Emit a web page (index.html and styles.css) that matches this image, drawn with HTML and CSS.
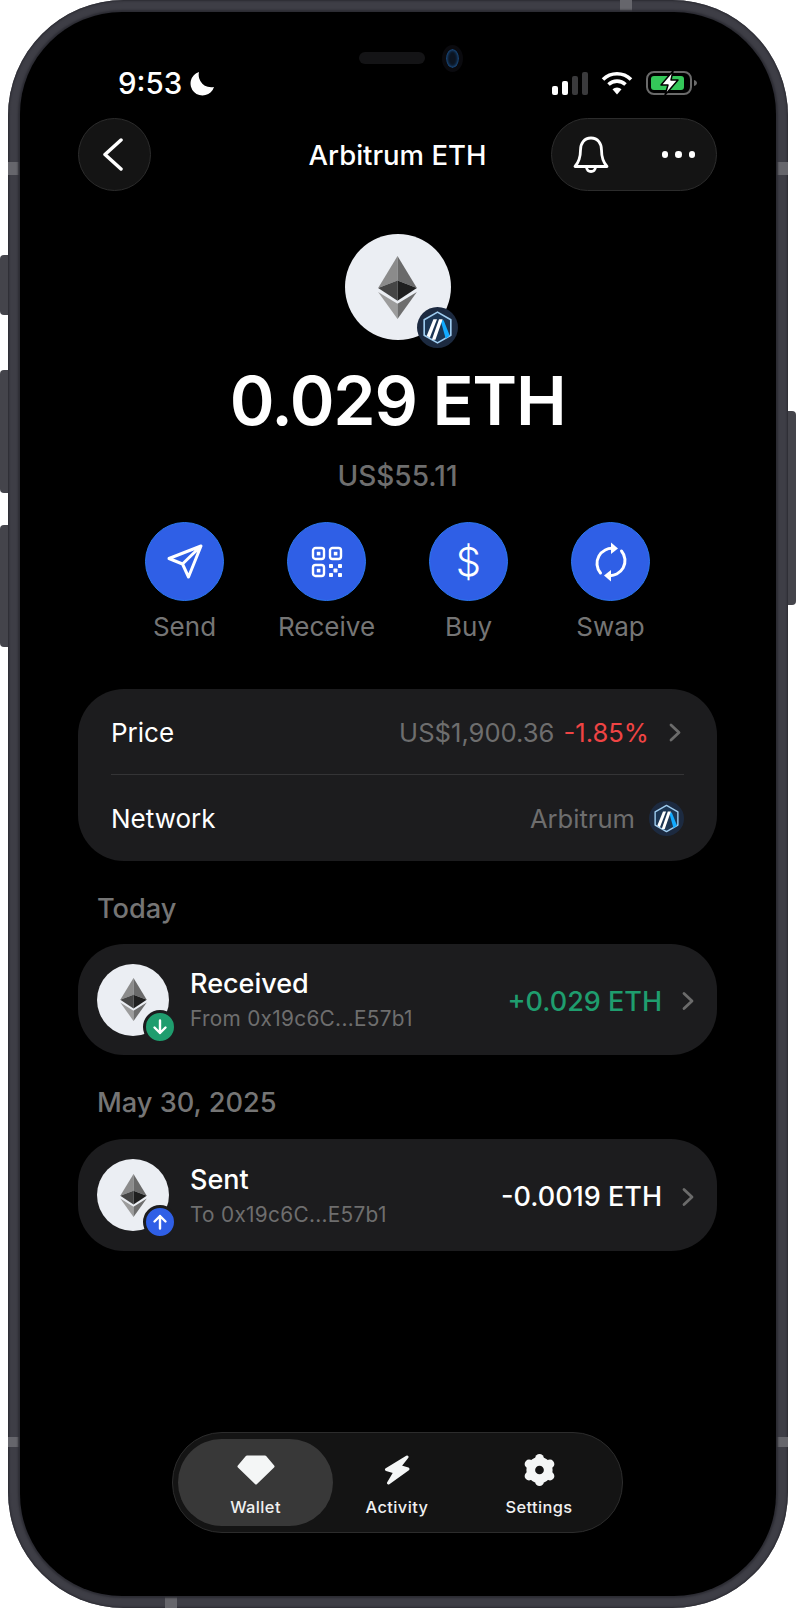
FILE: index.html
```html
<!DOCTYPE html>
<html lang="en">
<head>
<meta charset="UTF-8" />
<meta name="viewport" content="width=device-width, initial-scale=1" />
<title>Arbitrum ETH</title>
<link rel="stylesheet" href="styles.css">
</head>
<body>
  <svg class="defs" width="0" height="0">
    <symbol id="eth" viewBox="0 0 115 187">
      <polygon points="57.5,0 0,95 57.5,73" fill="#8b8b8b"/>
      <polygon points="57.5,0 115,95 57.5,73" fill="#6a6a6a"/>
      <polygon points="0,95 57.5,73 57.5,133" fill="#454545"/>
      <polygon points="115,95 57.5,73 57.5,133" fill="#1f1f1f"/>
      <polygon points="0,107 57.5,142 57.5,187" fill="#9c9c9c"/>
      <polygon points="115,107 57.5,142 57.5,187" fill="#6e6e6e"/>
    </symbol>
    <symbol id="arb" viewBox="0 0 40 40">
      <circle cx="20" cy="20" r="20" fill="#1c2a40"/>
      <polygon points="20,5 33,12.500 33,27.500 20,35 7,27.500 7,12.500" fill="#1c3654" stroke="#9fcdf0" stroke-width="1.600" stroke-linejoin="round"/>
      <polygon points="23,13 26,13 32,28 28,31" fill="#12aaff"/>
      <polygon points="16,12 19.500,12 12.500,30 9.500,28" fill="#fff"/>
      <polygon points="21.500,12 25,12 18,32 14.500,32" fill="#fff"/>
    </symbol>
  </svg>

  <div class="page">
    <div class="side-btn side-mute"></div>
    <div class="side-btn side-up"></div>
    <div class="side-btn side-down"></div>
    <div class="side-btn side-power"></div>

    <div class="phone">
      <div class="band band-left-top"></div>
      <div class="band band-right-top"></div>
      <div class="band band-left-bottom"></div>
      <div class="band band-right-bottom"></div>
      <div class="band-v band-top"></div>
      <div class="band-v band-bottom"></div>

      <div class="screen">
        <div class="speaker"></div>
        <div class="camera"></div>

        <div class="status-bar">
          <div class="status-left">
            <span class="time">9:53</span>
            <svg width="25" height="25" viewBox="0 0 25 25"><path d="M9 1 A12 12 0 1 0 24 16 A12.500 12.500 0 0 1 9 1 Z" fill="#fff"/></svg>
          </div>
          <div class="status-right">
            <div class="signal">
              <span class="bar bar-1"></span>
              <span class="bar bar-2"></span>
              <span class="bar bar-3"></span>
              <span class="bar bar-4"></span>
            </div>
            <svg width="32" height="24" viewBox="0 0 32 24" fill="none" stroke="#fff" stroke-width="3.600">
              <path d="M2 8.500 A20 20 0 0 1 30 8.500"/>
              <path d="M7.500 13.500 A12.500 12.500 0 0 1 24.500 13.500"/>
              <path d="M16 23.500 L11.500 18.300 A6.500 6.500 0 0 1 20.500 18.300 Z" fill="#fff" stroke="none"/>
            </svg>
            <svg width="52" height="26" viewBox="0 0 52 26">
              <rect x="1" y="2" width="44" height="22" rx="7" fill="none" stroke="#6a6a6a" stroke-width="2"/>
              <rect x="5" y="6" width="33" height="14" rx="3" fill="#34c759"/>
              <path d="M48 10 C50 10.500 51 12 51 13 C51 14 50 15.500 48 16 Z" fill="#6a6a6a"/>
              <path d="M27 1 L15 15 H22 L19 25 L32 10 H25 Z" fill="#fff" stroke="#000" stroke-width="1.500" stroke-linejoin="round"/>
            </svg>
          </div>
        </div>

        <div class="header">
          <button class="back-btn">
            <svg width="20" height="33" viewBox="0 0 20 33" fill="none" stroke="#fff" stroke-width="3.500" stroke-linecap="round" stroke-linejoin="round"><path d="M18 2 L2 16.500 L18 31"/></svg>
          </button>
          <div class="title">Arbitrum ETH</div>
          <div class="header-pill">
            <svg width="36" height="38" viewBox="0 0 36 38" fill="none" stroke="#fff" stroke-width="2.800" stroke-linejoin="round" stroke-linecap="round">
              <path d="M18 2 C11 2 7.500 7.500 7.500 14 C7.500 21 6 26 2 30.500 H34 C30 26 28.500 21 28.500 14 C28.500 7.500 25 2 18 2 Z"/>
              <path d="M13.500 31 C13.500 37 22.500 37 22.500 31"/>
            </svg>
            <div class="dots"><span></span><span></span><span></span></div>
          </div>
        </div>

        <div class="coin">
          <div class="coin-circle">
            <svg class="eth-big"><use href="#eth"/></svg>
          </div>
          <svg class="coin-badge"><use href="#arb"/></svg>
        </div>
        <div class="amount">0.029 ETH</div>
        <div class="amount-usd">US$55.11</div>

        <div class="actions">
          <div class="action">
            <div class="action-circle">
              <svg width="38" height="37" viewBox="-2 -2 38 37" fill="none" stroke="#fff" stroke-width="3" stroke-linejoin="round" stroke-linecap="round">
                <path d="M1 13.500 L33 1 L20.500 32 L14.500 19 Z M14.500 19 L33 1"/>
              </svg>
            </div>
            <span class="action-label">Send</span>
          </div>
          <div class="action">
            <div class="action-circle">
              <svg width="32" height="32" viewBox="0 0 32 32" fill="#fff">
                <g fill="none" stroke="#fff" stroke-width="2.400">
                  <rect x="2" y="2" width="11" height="11" rx="2.500"/>
                  <rect x="19" y="2" width="11" height="11" rx="2.500"/>
                  <rect x="2" y="19" width="11" height="11" rx="2.500"/>
                </g>
                <rect x="5.800" y="5.800" width="3.600" height="3.600"/>
                <rect x="22.800" y="5.800" width="3.600" height="3.600"/>
                <rect x="5.800" y="22.800" width="3.600" height="3.600"/>
                <rect x="18" y="18" width="4" height="4" rx="0.800"/>
                <rect x="27" y="18" width="4" height="4" rx="0.800"/>
                <rect x="22.500" y="22.500" width="4" height="4" rx="0.800"/>
                <rect x="18" y="27" width="4" height="4" rx="0.800"/>
                <rect x="27" y="27" width="4" height="4" rx="0.800"/>
              </svg>
            </div>
            <span class="action-label">Receive</span>
          </div>
          <div class="action">
            <div class="action-circle dollar">$</div>
            <span class="action-label">Buy</span>
          </div>
          <div class="action">
            <div class="action-circle">
              <svg width="36" height="40" viewBox="0 0 36 40" fill="none" stroke="#fff" stroke-width="3" stroke-linecap="round">
                <path d="M21 6.500 A15 15 0 0 0 7.500 31"/>
                <path d="M15 33.500 A15 15 0 0 0 28.500 9"/>
                <polygon points="18,0.500 25,6.500 18,12" fill="#fff" stroke="none"/>
                <polygon points="18,28 11,33.500 18,39.500" fill="#fff" stroke="none"/>
              </svg>
            </div>
            <span class="action-label">Swap</span>
          </div>
        </div>

        <div class="info-card">
          <div class="info-row info-row-price">
            <span>Price</span>
            <div class="info-value">
              <span class="muted">US$1,900.36</span>
              <span class="red">-1.85%</span>
              <svg class="chev-price" width="12" height="19" viewBox="0 0 12 19" fill="none" stroke="#6b6b6b" stroke-width="2.800" stroke-linecap="round" stroke-linejoin="round"><path d="M2 2 L10 9.500 L2 17"/></svg>
            </div>
          </div>
          <div class="info-row">
            <span>Network</span>
            <div class="info-value">
              <span class="muted">Arbitrum</span>
              <svg class="net-icon"><use href="#arb"/></svg>
            </div>
          </div>
        </div>

        <div class="section-label">Today</div>
        <div class="tx-row">
          <div class="tx-icon">
            <svg class="eth-small"><use href="#eth"/></svg>
            <div class="tx-badge tx-badge-in">
              <svg width="16" height="16" viewBox="0 0 16 16" fill="none" stroke="#fff" stroke-width="2.400" stroke-linecap="round" stroke-linejoin="round"><path d="M8 1.500 V14 M2.500 8.500 L8 14 L13.500 8.500"/></svg>
            </div>
          </div>
          <div class="tx-text">
            <div class="tx-title">Received</div>
            <div class="tx-sub">From 0x19c6C...E57b1</div>
          </div>
          <div class="tx-amount green">+0.029 ETH</div>
          <svg class="tx-chev" width="14" height="20" viewBox="0 0 14 20" fill="none" stroke="#6b6b6b" stroke-width="2.800" stroke-linecap="round" stroke-linejoin="round"><path d="M3 2.500 L11 10 L3 17.500"/></svg>
        </div>

        <div class="section-label">May 30, 2025</div>
        <div class="tx-row tx-row-sent">
          <div class="tx-icon">
            <svg class="eth-small"><use href="#eth"/></svg>
            <div class="tx-badge tx-badge-out">
              <svg width="16" height="16" viewBox="0 0 16 16" fill="none" stroke="#fff" stroke-width="2.400" stroke-linecap="round" stroke-linejoin="round"><path d="M8 14.500 V2 M2.500 7.500 L8 2 L13.500 7.500"/></svg>
            </div>
          </div>
          <div class="tx-text">
            <div class="tx-title">Sent</div>
            <div class="tx-sub">To 0x19c6C...E57b1</div>
          </div>
          <div class="tx-amount">-0.0019 ETH</div>
          <svg class="tx-chev" width="14" height="20" viewBox="0 0 14 20" fill="none" stroke="#6b6b6b" stroke-width="2.800" stroke-linecap="round" stroke-linejoin="round"><path d="M3 2.500 L11 10 L3 17.500"/></svg>
        </div>

        <div class="tab-bar">
          <div class="tab tab-active">
            <div class="tab-icon">
              <svg width="38" height="30" viewBox="0 0 38 30"><polygon points="10,2 28,2 36,11.500 19,28 2,11.500" fill="#f4f6f6" stroke="#f4f6f6" stroke-width="3" stroke-linejoin="round"/></svg>
            </div>
            <span>Wallet</span>
          </div>
          <div class="tab">
            <div class="tab-icon">
              <svg width="26" height="30" viewBox="0 0 26 30"><polygon points="23,2 2.500,14.500 11,17 4.500,28 24,14 15.500,11.500" fill="#f4f6f6" stroke="#f4f6f6" stroke-width="3" stroke-linejoin="round"/></svg>
            </div>
            <span>Activity</span>
          </div>
          <div class="tab">
            <div class="tab-icon">
              <svg width="33" height="34" viewBox="-17 -17 34 34" fill="#f4f6f6">
                <circle r="9" fill="none" stroke="#f4f6f6" stroke-width="9"/>
                <circle cx="0" cy="-12" r="4.500"/>
                <circle cx="0" cy="12" r="4.500"/>
                <circle cx="10.800" cy="-6.200" r="4.500"/>
                <circle cx="-10.800" cy="-6.200" r="4.500"/>
                <circle cx="10.800" cy="6.200" r="4.500"/>
                <circle cx="-10.800" cy="6.200" r="4.500"/>
              </svg>
            </div>
            <span>Settings</span>
          </div>
        </div>
      </div>
    </div>
  </div>
</body>
</html>
```

FILE: styles.css
```css
html, body {
  margin: 0;
  background: #fff;
}
body {
  font-family: Inter, "Liberation Sans", sans-serif;
  color: #fff;
}
.defs {
  position: absolute;
}
.page {
  position: relative;
  width: 796px;
  height: 1608px;
  padding: 0 8px;
  box-sizing: border-box;
  overflow: hidden;
}

/* phone frame */
.phone {
  position: relative;
  height: 1608px;
  padding: 12px;
  box-sizing: border-box;
  background: #3e3e46;
  border-radius: 116px;
  box-shadow: inset 0 0 2px 1px #2a2a31;
}
.screen {
  position: relative;
  height: 100%;
  padding: 48px 59px 63px 58px;
  box-sizing: border-box;
  display: flex;
  flex-direction: column;
  background: #000;
  border-radius: 102px;
  box-shadow: 0 0 2px 2px #2c2c33;
}
.side-btn {
  position: absolute;
  width: 9px;
  background: #44444b;
  border-radius: 4px 0 0 4px;
  left: 0;
}
.side-mute { top: 255px; height: 60px; }
.side-up { top: 370px; height: 123px; }
.side-down { top: 525px; height: 122px; }
.side-power {
  left: auto;
  right: 0;
  top: 411px;
  height: 194px;
  border-radius: 0 4px 4px 0;
}
.band, .band-v {
  position: absolute;
  background: #66666c;
}
.band { width: 12px; height: 13px; }
.band-v { width: 12px; height: 12px; }
.band-left-top { left: 0; top: 162px; }
.band-right-top { right: 0; top: 162px; }
.band-left-bottom { left: 0; top: 1437px; height: 10px; }
.band-right-bottom { right: 0; top: 1437px; height: 10px; }
.band-top { top: 0; left: 612px; }
.band-bottom { bottom: 0; left: 157px; }

.speaker {
  position: absolute;
  top: 40px;
  left: 339px;
  width: 66px;
  height: 12px;
  background: #141416;
  border-radius: 6px;
}
.camera {
  position: absolute;
  top: 33px;
  left: 422px;
  width: 21px;
  height: 27px;
  background: #0c1420;
  border: 4px solid #0a0a0e;
  box-sizing: border-box;
  border-radius: 50%;
  box-shadow: inset 0 0 3px 1px #1d5a9a;
}

/* status bar */
.status-bar {
  height: 46px;
  flex: none;
  display: flex;
  align-items: center;
  justify-content: space-between;
  margin: 0 19px 0 40px;
}
.status-left {
  display: flex;
  align-items: center;
  gap: 8px;
}
.time {
  font-size: 29.500px;
  font-weight: 500;
}
.status-right {
  display: flex;
  align-items: center;
  gap: 13px;
}
.signal {
  display: flex;
  align-items: flex-end;
  gap: 4px;
  height: 23px;
}
.bar {
  width: 6px;
  border-radius: 2px;
  background: #fff;
}
.bar-1 { height: 9px; }
.bar-2 { height: 14px; }
.bar-3 { height: 19px; background: #3a3a3c; }
.bar-4 { height: 23px; background: #3a3a3c; }

/* header */
.header {
  flex: none;
  height: 73px;
  margin-top: 12px;
  display: grid;
  grid-template-columns: 1fr auto 1fr;
  align-items: center;
}
.back-btn {
  width: 73px;
  height: 73px;
  padding: 0 4px 0 0;
  background: #141414;
  border: 1px solid #2c2c2c;
  border-radius: 50%;
  display: flex;
  align-items: center;
  justify-content: center;
}
.title {
  font-size: 27.500px;
  font-weight: 500;
}
.header-pill {
  justify-self: end;
  width: 166px;
  height: 73px;
  padding: 0 21px 0 21px;
  box-sizing: border-box;
  background: #141414;
  border: 1px solid #2c2c2c;
  border-radius: 37px;
  display: flex;
  align-items: center;
  justify-content: space-between;
}
.dots {
  display: flex;
  gap: 7px;
}
.dots span {
  width: 6.500px;
  height: 6.500px;
  background: #fff;
  border-radius: 50%;
}

/* coin */
.coin {
  position: relative;
  flex: none;
  width: 106px;
  height: 106px;
  margin: 43px auto 0;
}
.coin-circle {
  width: 106px;
  height: 106px;
  background: #ebeef3;
  border-radius: 50%;
  display: flex;
  align-items: center;
  justify-content: center;
}
.eth-big {
  width: 39px;
  height: 63px;
}
.coin-badge {
  position: absolute;
  right: -7px;
  bottom: -8px;
  width: 41px;
  height: 41px;
}
.amount {
  margin-top: 16px;
  font-size: 68px;
  letter-spacing: -1.300px;
  line-height: 88px;
  font-weight: 600;
  text-align: center;
}
.amount-usd {
  margin-top: 14px;
  font-size: 28px;
  line-height: 36px;
  color: #6e6e6e;
  font-weight: 500;
  text-align: center;
}

/* actions */
.actions {
  flex: none;
  margin: 28px auto 0;
  display: grid;
  grid-template-columns: repeat(4, 142px);
}
.action {
  display: flex;
  flex-direction: column;
  align-items: center;
}
.action-circle {
  width: 79px;
  height: 79px;
  box-sizing: border-box;
  background: #2f5fe6;
  border: 1px solid #2b78f0;
  border-radius: 50%;
  display: flex;
  align-items: center;
  justify-content: center;
}
.dollar {
  font-size: 40px;
  font-weight: 300;
}
.action-label {
  margin-top: 9px;
  font-size: 26px;
  line-height: 34px;
  color: #757575;
}

/* price / network card */
.info-card {
  flex: none;
  margin-top: 45px;
  padding: 0 33px;
  background: #1c1c1e;
  border-radius: 46px;
  font-size: 26px;
}
.info-row {
  height: 86px;
  display: flex;
  align-items: center;
  justify-content: space-between;
}
.info-row-price {
  height: 86px;
  padding-top: 2px;
  box-sizing: border-box;
  border-bottom: 1px solid #343436;
}
.info-value {
  display: flex;
  align-items: center;
  gap: 9px;
  font-size: 25.600px;
}
.muted { color: #6e6e6e; }
.red { color: #ef4444; }
.green { color: #1f9d6e; }
.chev-price {
  margin: 0 3px 0 11px;
}
.net-icon {
  width: 35px;
  height: 35px;
  margin-left: 5px;
}

/* transactions */
.section-label {
  flex: none;
  margin: 32px 0 0 19px;
  font-size: 27.200px;
  line-height: 32px;
  font-weight: 500;
  color: #757575;
}
.tx-row {
  flex: none;
  height: 111px;
  margin-top: 19px;
  padding: 0 22px 0 19px;
  box-sizing: border-box;
  background: #1c1c1e;
  border-radius: 46px;
  display: flex;
  align-items: center;
}
.tx-row-sent {
  height: 112px;
  margin-top: 20px;
}
.tx-icon {
  position: relative;
  width: 72px;
  height: 72px;
  flex: none;
  background: #ebeef3;
  border-radius: 50%;
  display: flex;
  align-items: center;
  justify-content: center;
}
.eth-small {
  width: 27px;
  height: 43px;
}
.tx-badge {
  position: absolute;
  right: -8px;
  bottom: -8px;
  width: 28px;
  height: 28px;
  border: 3px solid #1c1c1e;
  border-radius: 50%;
  display: flex;
  align-items: center;
  justify-content: center;
}
.tx-badge-in { background: #1f9d6e; }
.tx-badge-out { background: #2f5fe6; }
.tx-text {
  flex: 1;
  margin: 1px 0 0 21px;
}
.tx-title {
  font-size: 27px;
  line-height: 34px;
  font-weight: 500;
}
.tx-sub {
  margin-top: 4px;
  font-size: 20.800px;
  line-height: 28px;
  letter-spacing: 0.3px;
  color: #6e6e6e;
}
.tx-amount {
  margin-top: 3px;
  font-size: 27px;
  font-weight: 500;
}
.tx-chev {
  margin: 3px 0 0 19px;
}

/* bottom tabs */
.tab-bar {
  flex: none;
  width: 451px;
  height: 101px;
  margin: auto auto 0;
  padding: 6px 5px;
  box-sizing: border-box;
  background: #141414;
  border: 1px solid #2c2c2c;
  border-radius: 50px;
  display: grid;
  grid-template-columns: 155px 128px 1fr;
}
.tab {
  padding-top: 14px;
  display: flex;
  flex-direction: column;
  align-items: center;
  font-size: 16.400px;
  line-height: 20px;
  font-weight: 500;
  letter-spacing: 0.4px;
  color: #f0f0f0;
}
.tab-icon {
  height: 34px;
  margin-bottom: 10px;
  display: flex;
  align-items: center;
  justify-content: center;
}
.tab-active {
  background: #383838;
  border-radius: 44px;
}
```
